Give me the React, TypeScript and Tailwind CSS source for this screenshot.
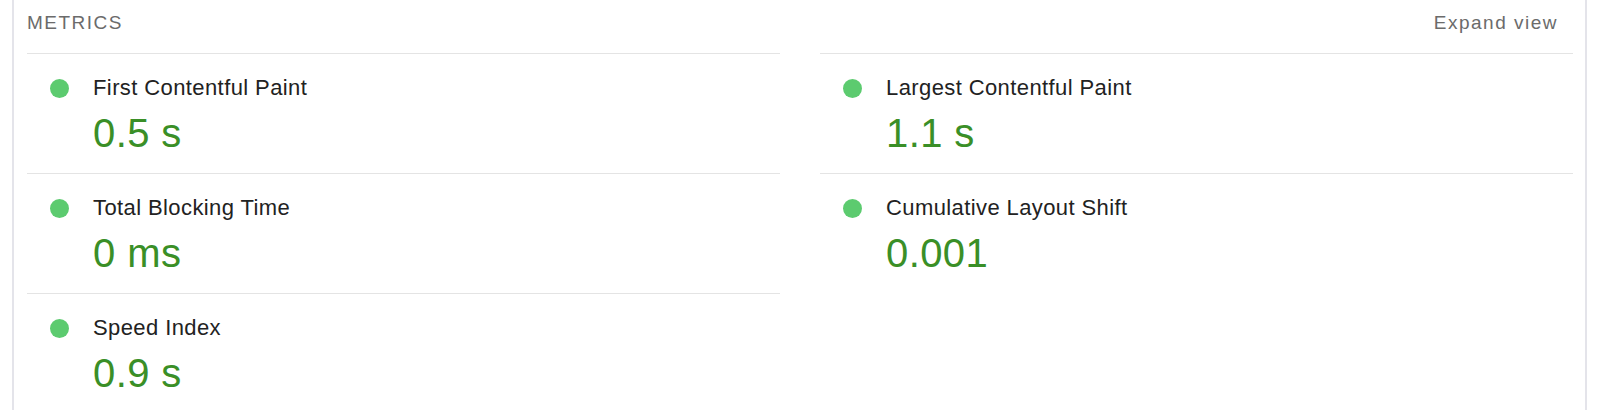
const metrics = [
  [
    { label: "First Contentful Paint", value: "0.5 s" },
    { label: "Total Blocking Time", value: "0 ms" },
    { label: "Speed Index", value: "0.9 s" },
  ],
  [
    { label: "Largest Contentful Paint", value: "1.1 s" },
    { label: "Cumulative Layout Shift", value: "0.001" },
  ],
];

const MetricRow = ({ label, value }: { label: string; value: string }) => (
  <div className="flex border-t border-[#e4e4e4] pt-[21px] pb-[18px]">
    <div className="flex h-[26px] w-[66px] items-center pl-[23px]">
      <span className="block h-[19px] w-[19px] rounded-full bg-[#5ccb6f]" />
    </div>
    <div className="flex flex-col">
      <div className="text-[22px] leading-[26px] tracking-[0.4px] text-[#222222]">
        {label}
      </div>
      <div className="mt-[10px] text-[40px] leading-[44px] tracking-[0.4px] text-[#3a8f27]">
        {value}
      </div>
    </div>
  </div>
);

const App = () => {
  return (
    <div
      className="h-[410px] w-[1600px] overflow-hidden bg-white pl-[12px] pr-[13px]"
      style={{ fontFamily: '"Liberation Sans", Arial, sans-serif' }}
    >
      <div className="h-full border-x-2 border-[#e4e4ea] pl-[13px] pr-[12px]">
        <div className="flex h-[53px] items-start justify-between pt-[12px] text-[19px] leading-[22px] tracking-[1.5px] text-[#6b6b6b]">
          <span>METRICS</span>
          <span className="pr-[15px]">Expand view</span>
        </div>
        <div className="grid grid-cols-2 gap-x-[40px]">
          {metrics.map((col, i) => (
            <div key={i} className="flex flex-col">
              {col.map((m) => (
                <MetricRow key={m.label} label={m.label} value={m.value} />
              ))}
            </div>
          ))}
        </div>
      </div>
    </div>
  );
};

export default App;
